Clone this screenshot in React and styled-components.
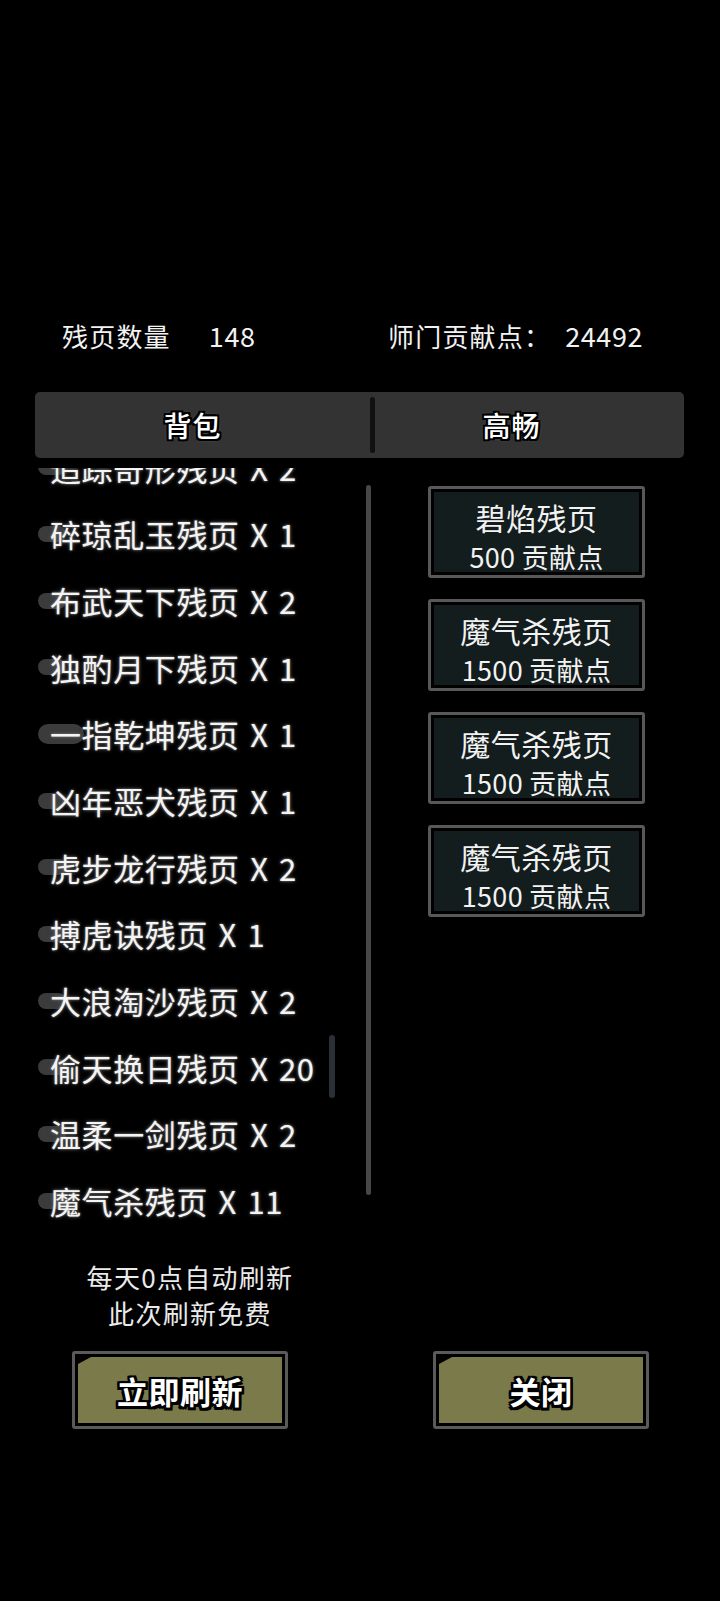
import React from "react";
import styled, { createGlobalStyle } from "styled-components";

const Global = createGlobalStyle`
  html, body { margin: 0; padding: 0; background: #000; }
  body {
    width: 720px;
    min-height: 1601px;
    font-family: "Noto Sans CJK SC", "Noto Sans", sans-serif;
    color: #fff;
  }
`;

const Page = styled.div`
  width: 720px;
  height: 1601px;
  background: #000;
  overflow: hidden;
  display: flex;
  flex-direction: column;
`;

const Header = styled.div`
  margin-top: 316px;
  height: 40px;
  display: grid;
  grid-template-columns: 326px auto;
  padding-left: 62px;
  align-items: center;
  font-size: 26px;
  letter-spacing: 1.2px;
  color: #f2f2f2;
`;

const Stat = styled.div`
  display: flex;
  align-items: center;
  gap: ${(p) => p.$gap}px;
  white-space: nowrap;
  line-height: 40px;
`;

const Num = styled.span`
  font-size: 27px;
  letter-spacing: 0.6px;
`;

const TabBar = styled.div`
  margin: 36px 0 0 35px;
  width: 649px;
  height: 66px;
  background: #333333;
  border-radius: 5px;
  display: grid;
  grid-template-columns: 335px 5px 1fr;
  align-items: center;
`;

const outline = (w, c) =>
  [
    `${-w}px ${-w}px 0 ${c}`,
    `${w}px ${-w}px 0 ${c}`,
    `${-w}px ${w}px 0 ${c}`,
    `${w}px ${w}px 0 ${c}`,
    `0 ${w}px 0 ${c}`,
    `0 ${-w}px 0 ${c}`,
    `${w}px 0 0 ${c}`,
    `${-w}px 0 0 ${c}`,
  ].join(", ");

const Tab = styled.div`
  text-align: center;
  padding-right: ${(p) => p.$shift}px;
  font-size: 28px;
  font-weight: 500;
  color: #fff;
  letter-spacing: 1px;
  text-shadow: ${outline(2, "#000")}, 0 0 4px #777;
`;

const Divider = styled.div`
  width: 5px;
  height: 56px;
  border-radius: 3px;
  background: #111;
`;

const Body = styled.div`
  margin-top: 10px;
  display: flex;
  height: 767px;
`;

const ListViewport = styled.div`
  position: relative;
  width: 340px;
  margin-left: 35px;
  height: 767px;
  overflow: hidden;
`;

const List = styled.div`
  margin-top: -34px;
  display: flex;
  flex-direction: column;
`;

const Item = styled.div`
  position: relative;
  height: 66.66px;
  display: flex;
  align-items: center;
  padding-left: 15px;
  font-size: 31px;
  letter-spacing: 0.6px;
  word-spacing: 3px;
  white-space: nowrap;
  color: #f4f4f4;
  text-shadow: 0 0 2px #888, 0 0 4px #555;

  &::before {
    content: "";
    position: absolute;
    left: 3px;
    top: 50%;
    margin-top: -${(p) => (p.$wide ? 10 : 8)}px;
    width: ${(p) => (p.$wide ? 46 : 28)}px;
    height: ${(p) => (p.$wide ? 20 : 16)}px;
    border-radius: 10px;
    background: #3b3b3b;
    filter: blur(0.6px);
  }
`;

const ItemText = styled.span`
  position: relative;
`;

const Smear = styled.span`
  position: relative;
  &::before {
    content: "";
    position: absolute;
    left: -4px;
    right: -6px;
    top: 50%;
    margin-top: -6px;
    height: 12px;
    border-radius: 6px;
    background: #3b3b3b;
    z-index: -1;
  }
`;

const ScrollBar = styled.div`
  position: absolute;
  left: ${(p) => p.$x}px;
  top: ${(p) => p.$y}px;
  width: ${(p) => p.$w}px;
  height: ${(p) => p.$h}px;
  border-radius: 3px;
  background: ${(p) => p.$c};
`;

const Cards = styled.div`
  margin: 18px 0 0 53px;
  display: flex;
  flex-direction: column;
  gap: 21px;
`;

const Card = styled.div`
  width: 217px;
  height: 92px;
  box-sizing: border-box;
  border: 3px solid #585858;
  border-radius: 3px;
  background: #131d1d;
  box-shadow: inset 0 0 0 3px #000;
  padding-top: 11px;
  display: flex;
  flex-direction: column;
  align-items: center;
  color: #f2f2f2;
  white-space: nowrap;
`;

const CardTitle = styled.div`
  font-size: 30px;
  line-height: 34px;
  height: 34px;
  letter-spacing: 0.5px;
`;

const CardPrice = styled.div`
  font-size: 27px;
  line-height: 32px;
  height: 32px;
  margin-top: 7px;
  letter-spacing: 0.3px;
`;

const Notice = styled.div`
  margin: 24px 0 0 35px;
  width: 310px;
  text-align: center;
  font-size: 26px;
  line-height: 36px;
  letter-spacing: 1.3px;
  color: #eaeaea;
`;

const ButtonRow = styled.div`
  margin: 20px 0 0 72px;
  display: flex;
  gap: 145px;
`;

const Button = styled.div`
  width: 216px;
  height: 78px;
  box-sizing: border-box;
  border: 3px solid #5a5a5a;
  border-radius: 3px;
  background: #000;
  padding: 3px;
  display: flex;
`;

const ButtonFace = styled.div`
  flex: 1;
  background: #7a7a4b;
  clip-path: polygon(13px 0, 100% 0, 100% 100%, 0 100%, 0 7px);
  display: flex;
  align-items: center;
  justify-content: center;
  font-size: 31px;
  font-weight: 700;
  color: #fff;
  letter-spacing: 0.5px;
  text-shadow: ${outline(2.5, "#000")}, 0 0 3px #000;
`;

const items = [
  { n: "追踪奇形残页", c: 2 },
  { n: "碎琼乱玉残页", c: 1 },
  { n: "布武天下残页", c: 2 },
  { n: "独酌月下残页", c: 1 },
  { n: "一指乾坤残页", c: 1, wide: true },
  { n: "凶年恶犬残页", c: 1 },
  { n: "虎步龙行残页", c: 2 },
  { n: "搏虎诀残页", c: 1 },
  { n: "大浪淘沙残页", c: 2 },
  { n: "偷天换日残页", c: 20 },
  { n: "温柔一剑残页", c: 2, smear: 2 },
  { n: "魔气杀残页", c: 11 },
];

const shop = [
  { t: "碧焰残页", p: "500 贡献点" },
  { t: "魔气杀残页", p: "1500 贡献点" },
  { t: "魔气杀残页", p: "1500 贡献点" },
  { t: "魔气杀残页", p: "1500 贡献点" },
];

function ItemName({ it }) {
  if (it.smear === undefined) return <>{it.n}</>;
  const s = it.smear;
  return (
    <>
      {it.n.slice(0, s)}
      <Smear>{it.n[s]}</Smear>
      {it.n.slice(s + 1)}
    </>
  );
}

export default function App() {
  return (
    <Page>
      <Global />
      <Header>
        <Stat $gap={38}>
          <span>残页数量</span>
          <Num>148</Num>
        </Stat>
        <Stat $gap={14}>
          <span>师门贡献点：</span>
          <Num>24492</Num>
        </Stat>
      </Header>

      <TabBar>
        <Tab $shift={20}>背包</Tab>
        <Divider />
        <Tab $shift={36}>高畅</Tab>
      </TabBar>

      <Body>
        <ListViewport>
          <List>
            {items.map((it, i) => (
              <Item key={i} $wide={it.wide}>
                <ItemText>
                  <ItemName it={it} /> X {it.c}
                </ItemText>
              </Item>
            ))}
          </List>
          <ScrollBar $x={331} $y={17} $w={5} $h={710} $c="#474747" />
          <ScrollBar $x={294} $y={567} $w={6} $h={63} $c="#2b3036" />
        </ListViewport>

        <Cards>
          {shop.map((s, i) => (
            <Card key={i}>
              <CardTitle>{s.t}</CardTitle>
              <CardPrice>{s.p}</CardPrice>
            </Card>
          ))}
        </Cards>
      </Body>

      <Notice>
        每天0点自动刷新
        <br />
        此次刷新免费
      </Notice>

      <ButtonRow>
        <Button>
          <ButtonFace>立即刷新</ButtonFace>
        </Button>
        <Button>
          <ButtonFace>关闭</ButtonFace>
        </Button>
      </ButtonRow>
    </Page>
  );
}
